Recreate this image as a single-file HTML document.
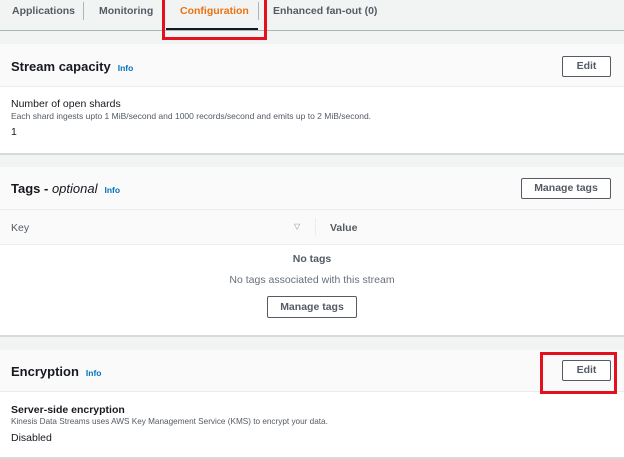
<!DOCTYPE html>
<html><head><meta charset="utf-8"><style>
*{box-sizing:border-box;margin:0;padding:0}
body{width:624px;height:459px;background:#f2f3f3;font-family:"Liberation Sans",sans-serif;color:#16191f;position:relative;overflow:hidden}
.abs{position:absolute}
.tab{position:absolute;top:0;height:31px;line-height:22px;font-size:10.5px;font-weight:bold;color:#545b64}
.sep{position:absolute;top:2px;width:1px;height:18px;background:#aab7b8}
.panel{position:absolute;left:0;width:624px;background:#fff;border-bottom:2px solid #d5dbdb}
.hdr{background:#fafafa;border-bottom:1px solid #eaeded;position:relative}
.h{position:absolute;left:11px;font-size:13px;font-weight:bold}
.info{font-size:8.5px;color:#0073bb;font-weight:bold;margin-left:7px}
.btn{position:absolute;border:1px solid #545b64;border-radius:2px;background:#fff;font-size:10.5px;font-weight:bold;color:#545b64;text-align:center}
.red{position:absolute;border:3px solid #e3101e}
</style></head><body>
<div class="abs" style="left:0;top:30px;width:624px;height:1px;background:#aab7b8"></div>
<div class="tab" style="left:12px">Applications</div>
<div class="sep" style="left:83px"></div>
<div class="tab" style="left:99px">Monitoring</div>
<div class="tab" style="left:180px;color:#ec7211">Configuration</div>
<div class="abs" style="left:166px;top:28px;width:92px;height:2px;background:#16191f"></div>
<div class="sep" style="left:258px"></div>
<div class="tab" style="left:273px">Enhanced fan-out (0)</div>
<div class="red" style="left:162px;top:-3px;width:105px;height:43px"></div>

<div class="panel" style="top:44px;height:111px">
  <div class="hdr" style="height:43px"><div class="h" style="top:15px">Stream capacity<span class="info">Info</span></div>
  <div class="btn" style="left:562px;top:12px;width:49px;height:21px;line-height:19px">Edit</div></div>
  <div class="abs" style="left:11px;top:54px;font-size:10.5px">Number of open shards</div>
  <div class="abs" style="left:11px;top:67px;font-size:8.5px;color:#545b64">Each shard ingests upto 1 MiB/second and 1000 records/second and emits up to 2 MiB/second.</div>
  <div class="abs" style="left:11px;top:82px;font-size:10.5px">1</div>
</div>

<div class="panel" style="top:167px;height:170px">
  <div class="hdr" style="height:43px"><div class="h" style="top:14px">Tags - <i style="font-weight:normal">optional</i><span class="info">Info</span></div>
  <div class="btn" style="left:521px;top:11px;width:90px;height:21px;line-height:19px">Manage tags</div></div>
  <div style="height:35px;background:#fafafa;border-bottom:1px solid #eaeded;position:relative">
    <div class="abs" style="left:11px;top:12px;font-size:10.5px;color:#545b64">Key</div>
    <div class="abs" style="left:294px;top:12px;font-size:8px;color:#879596">▽</div>
    <div class="abs" style="left:315px;top:8px;width:1px;height:18px;background:#eaeded"></div>
    <div class="abs" style="left:330px;top:12px;font-size:10.5px;font-weight:bold;color:#545b64">Value</div>
  </div>
  <div class="abs" style="left:0;width:624px;top:86px;text-align:center;font-size:10.5px;font-weight:bold;color:#545b64">No tags</div>
  <div class="abs" style="left:0;width:624px;top:107px;text-align:center;font-size:10.5px;color:#687078">No tags associated with this stream</div>
  <div class="btn" style="left:267px;top:129px;width:90px;height:22px;line-height:20px">Manage tags</div>
</div>

<div class="panel" style="top:350px;height:109px">
  <div class="hdr" style="height:42px"><div class="h" style="top:14px">Encryption<span class="info">Info</span></div>
  <div class="btn" style="left:562px;top:10px;width:49px;height:21px;line-height:19px">Edit</div></div>
  <div class="abs" style="left:11px;top:54px;font-size:10.5px;font-weight:bold">Server-side encryption</div>
  <div class="abs" style="left:11px;top:67px;font-size:8.2px;color:#545b64">Kinesis Data Streams uses AWS Key Management Service (KMS) to encrypt your data.</div>
  <div class="abs" style="left:11px;top:82px;font-size:10.5px">Disabled</div>
</div>
<div class="red" style="left:540px;top:352px;width:77px;height:42px"></div>
</body></html>
